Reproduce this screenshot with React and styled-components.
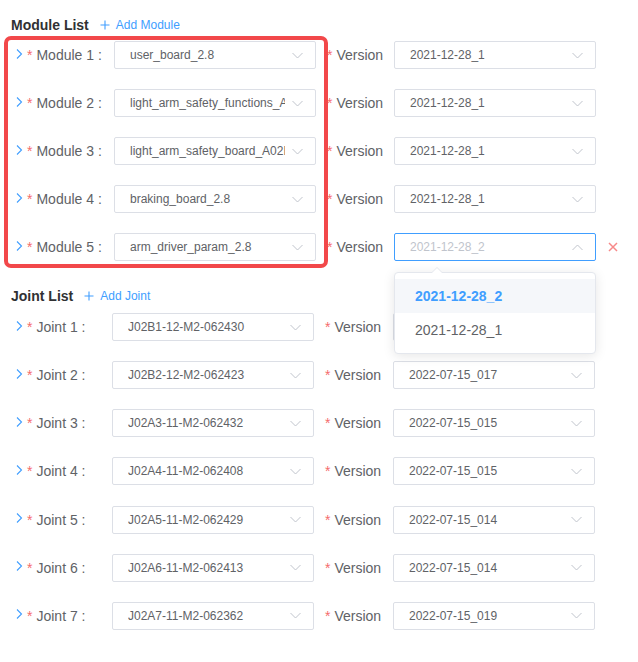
import React from 'react';
import styled, { createGlobalStyle } from 'styled-components';

const GlobalStyle = createGlobalStyle`
  body {
    margin: 0;
    background: #fff;
    font-family: "Liberation Sans", Arial, sans-serif;
  }
`;

const modules = [
  { name: 'Module 1', value: 'user_board_2.8', version: '2021-12-28_1' },
  { name: 'Module 2', value: 'light_arm_safety_functions_A02_2.8', version: '2021-12-28_1' },
  { name: 'Module 3', value: 'light_arm_safety_board_A02B_2.8', version: '2021-12-28_1' },
  { name: 'Module 4', value: 'braking_board_2.8', version: '2021-12-28_1' },
  { name: 'Module 5', value: 'arm_driver_param_2.8', version: '2021-12-28_2', open: true },
];

const joints = [
  { name: 'Joint 1', value: 'J02B1-12-M2-062430', version: '2022-07-15_017' },
  { name: 'Joint 2', value: 'J02B2-12-M2-062423', version: '2022-07-15_017' },
  { name: 'Joint 3', value: 'J02A3-11-M2-062432', version: '2022-07-15_015' },
  { name: 'Joint 4', value: 'J02A4-11-M2-062408', version: '2022-07-15_015' },
  { name: 'Joint 5', value: 'J02A5-11-M2-062429', version: '2022-07-15_014' },
  { name: 'Joint 6', value: 'J02A6-11-M2-062413', version: '2022-07-15_014' },
  { name: 'Joint 7', value: 'J02A7-11-M2-062362', version: '2022-07-15_019' },
];

const versionOptions = ['2021-12-28_2', '2021-12-28_1'];

function ArrowRight() {
  return (
    <svg width="7" height="10" viewBox="0 0 7 10">
      <polyline points="1,0.5 5.5,5 1,9.5" fill="none" stroke="#409eff" strokeWidth="1.1" />
    </svg>
  );
}

function Caret({ up }) {
  return (
    <svg width="11" height="7" viewBox="0 0 11 7">
      <polyline
        points={up ? '0.5,6 5.5,1 10.5,6' : '0.5,1 5.5,6 10.5,1'}
        fill="none"
        stroke="#c0c4cc"
        strokeWidth="1"
      />
    </svg>
  );
}

function Plus() {
  return (
    <svg width="10" height="10" viewBox="0 0 10 10">
      <path d="M5 0.5v9M0.5 5h9" stroke="#409eff" strokeWidth="1.1" fill="none" />
    </svg>
  );
}

function CloseIcon() {
  return (
    <svg width="10" height="10" viewBox="0 0 10 10">
      <path d="M1 1l8 8M9 1l-8 8" stroke="#f78989" strokeWidth="1.5" fill="none" />
    </svg>
  );
}

function SelectBox({ value, focused, placeholder }) {
  return (
    <Select $focused={focused}>
      <Value $placeholder={placeholder}>{value}</Value>
      <Caret up={focused} />
    </Select>
  );
}

function FormRow({ item, labelWidth, versionWidth }) {
  return (
    <Row>
      <Label $width={labelWidth}>
        <ArrowWrap><ArrowRight /></ArrowWrap>
        <Star>*</Star>
        {item.name} :
      </Label>
      <SelectBox value={item.value} />
      <VersionLabel $width={versionWidth}>
        <Star>*</Star>Version
      </VersionLabel>
      <SelectWrap>
        <SelectBox value={item.version} focused={item.open} placeholder={item.open} />
        {item.open && (
          <Dropdown>
            {versionOptions.map((v, i) => (
              <Option key={v} $active={i === 0}>{v}</Option>
            ))}
          </Dropdown>
        )}
      </SelectWrap>
      {item.open && <Remove><CloseIcon /></Remove>}
    </Row>
  );
}

export default function App() {
  return (
    <Page>
      <GlobalStyle />
      <Heading>
        <Title>Module List</Title>
        <AddLink><Plus />Add Module</AddLink>
      </Heading>
      <Rows $gap={20} $top={6}>
        <Highlight />
        {modules.map((m) => (
          <FormRow key={m.name} item={m} labelWidth={98} versionWidth={67} />
        ))}
      </Rows>
      <Heading $top={25}>
        <Title>Joint List</Title>
        <AddLink><Plus />Add Joint</AddLink>
      </Heading>
      <Rows $gap={20.17} $top={7}>
        {joints.map((j) => (
          <FormRow key={j.name} item={j} labelWidth={96} versionWidth={68} />
        ))}
      </Rows>
    </Page>
  );
}

const Page = styled.div`
  padding: 15px 0 20px 11px;
`;

const Heading = styled.div`
  display: flex;
  align-items: center;
  height: 20px;
  margin-top: ${(p) => p.$top || 0}px;
`;

const Title = styled.span`
  font-size: 14px;
  font-weight: bold;
  color: #303133;
  margin-right: 11px;
`;

const AddLink = styled.span`
  display: flex;
  align-items: center;
  gap: 6px;
  font-size: 12px;
  color: #409eff;
`;

const Rows = styled.div`
  position: relative;
  display: flex;
  flex-direction: column;
  gap: ${(p) => p.$gap}px;
  margin-top: ${(p) => p.$top}px;
`;

const Highlight = styled.div`
  position: absolute;
  top: -5px;
  left: -7px;
  width: 324px;
  height: 232px;
  box-sizing: border-box;
  border: 4px solid #f2484a;
  border-radius: 7px;
  pointer-events: none;
  z-index: 2;
`;

const Row = styled.div`
  display: flex;
  align-items: center;
  height: 28px;
  padding-left: 5px;
`;

const Label = styled.div`
  display: flex;
  align-items: center;
  width: ${(p) => p.$width}px;
  flex-shrink: 0;
  font-size: 14px;
  color: #606266;
  white-space: pre;
`;

const ArrowWrap = styled.span`
  display: flex;
  margin: -3px 4px 0 0;
`;

const Star = styled.span`
  color: #f56c6c;
  margin-right: 4px;
`;

const VersionLabel = styled.div`
  display: flex;
  align-items: center;
  width: ${(p) => p.$width}px;
  margin-left: 11px;
  flex-shrink: 0;
  font-size: 14px;
  color: #606266;
`;

const SelectWrap = styled.div`
  position: relative;
`;

const Select = styled.div`
  display: flex;
  align-items: center;
  box-sizing: border-box;
  width: 202px;
  height: 28px;
  padding: 0 12px 0 15px;
  border: 1px solid ${(p) => (p.$focused ? '#409eff' : '#dcdfe6')};
  border-radius: 2px;
  background: #fff;
`;

const Value = styled.span`
  flex: 1;
  min-width: 0;
  overflow: hidden;
  white-space: nowrap;
  margin-right: 7px;
  font-size: 12px;
  color: ${(p) => (p.$placeholder ? '#c0c4cc' : '#606266')};
`;

const Remove = styled.span`
  display: flex;
  margin-left: 12px;
`;

const Dropdown = styled.div`
  position: absolute;
  top: calc(100% + 11px);
  left: 0;
  z-index: 10;
  box-sizing: border-box;
  width: 202px;
  padding: 6px 0;
  background: #fff;
  border: 1px solid #e4e7ed;
  border-radius: 4px;
  box-shadow: 0 2px 12px 0 rgba(0, 0, 0, 0.1);

  &::before,
  &::after {
    content: '';
    position: absolute;
    left: 36px;
    width: 0;
    height: 0;
    border: 6px solid transparent;
    border-top-width: 0;
  }
  &::before {
    top: -6px;
    border-bottom-color: #e4e7ed;
  }
  &::after {
    top: -5px;
    border-bottom-color: #fff;
  }
`;

const Option = styled.div`
  height: 34px;
  line-height: 34px;
  padding: 0 20px;
  font-size: 14px;
  color: ${(p) => (p.$active ? '#409eff' : '#606266')};
  font-weight: ${(p) => (p.$active ? 'bold' : 'normal')};
  background: ${(p) => (p.$active ? '#f5f7fa' : '#fff')};
`;
